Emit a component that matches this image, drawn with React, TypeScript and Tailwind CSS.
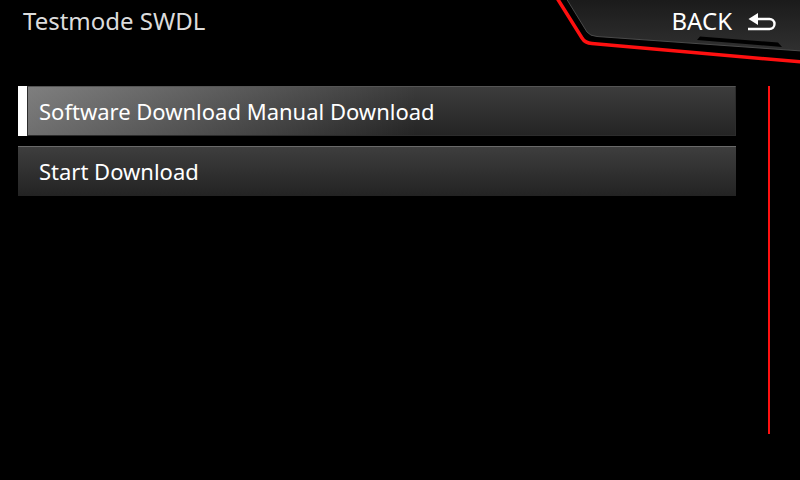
import React from 'react';

const rows = [
  { label: 'Software Download Manual Download', active: true },
  { label: 'Start Download', active: false },
];

const BackPanel: React.FC = () => (
  <svg
    className="absolute top-0 right-0"
    width={260}
    height={70}
    viewBox="540 0 260 70"
  >
    <defs>
      <linearGradient id="panel" x1="0" y1="0" x2="0" y2="1">
        <stop offset="0" stopColor="#1a1a1a" />
        <stop offset="1" stopColor="#303030" />
      </linearGradient>
    </defs>
    {/* red outline */}
    <path
      d="M557 -2 L582 38 Q585 43 592 43.5 L802 62"
      fill="none"
      stroke="#ff1010"
      strokeWidth={3.5}
    />
    {/* dark panel */}
    <path
      d="M566 -2 L587 32 Q590 36 597 36.5 L802 51 L802 -2 Z"
      fill="url(#panel)"
      stroke="#4a4a4a"
      strokeWidth={1}
    />
    {/* notch */}
    <path d="M697 40 L700 36.5 L778 42.5 L782 47 Z" fill="#000" />
  </svg>
);

const ReturnIcon: React.FC = () => (
  <svg width={30} height={20} viewBox="748 11 30 20">
    <path
      d="M757 19 H770.5 A5 5 0 0 1 770.5 29 H749"
      fill="none"
      stroke="#fff"
      strokeWidth={2.4}
    />
    <path d="M749.5 19 L759 13 L759 25 Z" fill="#fff" />
  </svg>
);

export default function App() {
  return (
    <div
      className="relative w-[800px] h-[480px] bg-black overflow-hidden text-[#e8e8e8]"
      style={{ fontFamily: '"Noto Sans", "Open Sans", sans-serif' }}
    >
      {/* Header */}
      <div className="relative flex h-[44px] items-start justify-between">
        <h1 className="pl-[23px] pt-[5px] text-[24px] leading-[32px] font-normal text-[#dcdcdc]">
          Testmode SWDL
        </h1>
        <BackPanel />
        <button className="relative z-10 mr-[23px] mt-[5px] flex items-center gap-[15px] text-[24px] leading-[32px] text-white">
          BACK
          <ReturnIcon />
        </button>
      </div>

      {/* Body */}
      <div className="flex pt-[42px]">
        <div className="ml-[18px] flex w-[718px] flex-col gap-[10px]">
          {rows.map((row) =>
            row.active ? (
              <div key={row.label} className="flex h-[50px]">
                <div className="w-[9px] bg-white" />
                <div className="flex flex-1 items-center border border-[#2c2c2c] border-t-[#555] bg-[linear-gradient(to_right,rgba(255,255,255,0.34),rgba(255,255,255,0)_55%),linear-gradient(#3c3c3c,#242424)] pl-[11px] text-[22px] text-white">
                  {row.label}
                </div>
              </div>
            ) : (
              <div
                key={row.label}
                className="flex h-[50px] items-center border-t border-[#6a6a6a] bg-[linear-gradient(#3e3e3e,#232323)] pl-[21px] text-[22px] text-white"
              >
                {row.label}
              </div>
            )
          )}
        </div>
        <div className="ml-[32px] h-[348px] w-[2px] bg-[#ff1010]" />
      </div>
    </div>
  );
}
